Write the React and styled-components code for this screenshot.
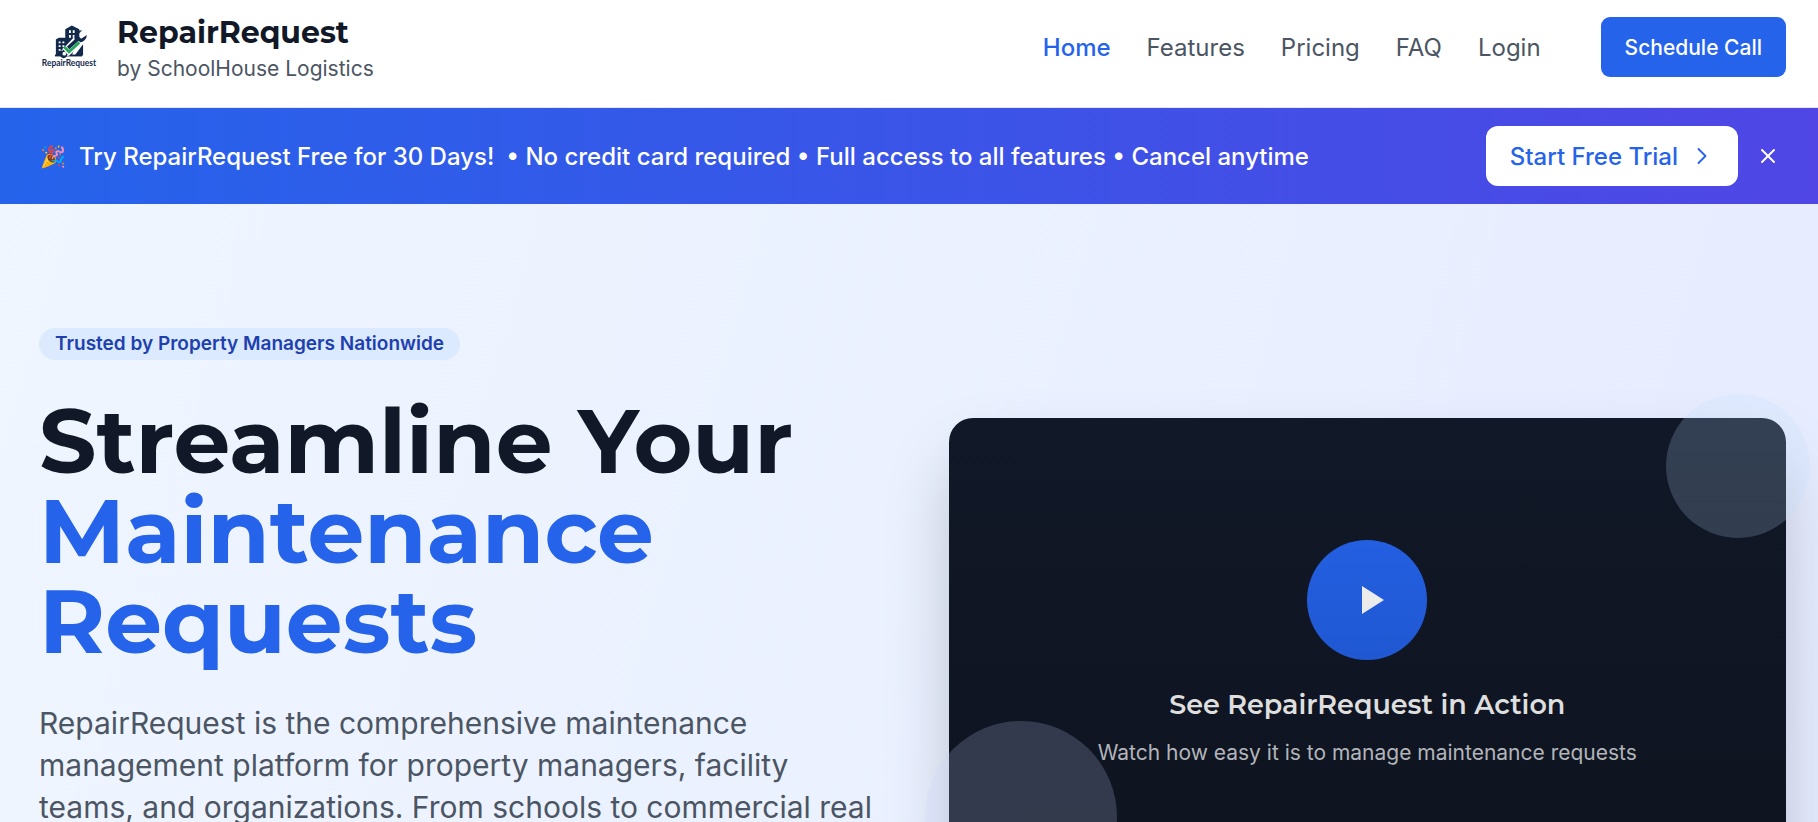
import React from "react";
import styled, { createGlobalStyle } from "styled-components";
import { ChevronRight, X } from "lucide-react";

const GlobalStyle = createGlobalStyle`
  *, *::before, *::after { box-sizing: border-box; }
  body { margin: 0; font-family: Inter, "Liberation Sans", sans-serif; color: #111827; }
  h1, h2, p { margin: 0; }
  a { color: inherit; text-decoration: none; }
  button { font-family: inherit; border: 0; cursor: pointer; }
`;

const Page = styled.div`
  display: flex;
  flex-direction: column;
  height: 100vh;
  overflow: hidden;
  background: linear-gradient(106deg, #eff6ff 0%, #e6ecff 100%);
`;

const Header = styled.header`
  display: flex;
  align-items: center;
  justify-content: space-between;
  flex: none;
  padding: 12px 32px 23px 39px;
  background: #fff;
  border-bottom: 1px solid #e5e7eb;
`;

const Brand = styled.a`
  display: flex;
  align-items: center;
  gap: 18px;
`;

const BrandText = styled.span`
  display: flex;
  flex-direction: column;
`;

const BrandName = styled.span`
  font-family: Montserrat, Inter, sans-serif;
  font-size: 30px;
  font-weight: 700;
  line-height: 42px;
`;

const Tagline = styled.span`
  font-size: 21px;
  line-height: 30px;
  color: #4b5563;
`;

const Nav = styled.nav`
  display: flex;
  align-items: center;
  gap: 36px;
`;

const NavLink = styled.a`
  font-size: 24px;
  line-height: 36px;
  font-weight: ${(p) => (p.$active ? 500 : 400)};
  color: ${(p) => (p.$active ? "#2563eb" : "#4b5563")};
`;

const ScheduleButton = styled.button`
  height: 60px;
  margin: 0 0 2px 24px;
  padding: 0 24px;
  border-radius: 9px;
  background: #2563eb;
  color: #fff;
  font-size: 21px;
  font-weight: 500;
`;

const Banner = styled.section`
  display: flex;
  align-items: center;
  flex: none;
  gap: 12px;
  height: 96px;
  padding: 0 32px 0 39px;
  background: linear-gradient(90deg, #2563eb, #4f46e5);
  color: #fff;
`;

const BannerText = styled.p`
  display: flex;
  align-items: center;
  flex: 1;
  gap: 12px;
  padding-top: 2px;
  font-size: 24px;
  line-height: 36px;
  font-weight: 500;
`;

const Emoji = styled.span`
  width: 28px;
  font-size: 21px;
  text-align: center;
`;

const TrialButton = styled.button`
  display: flex;
  align-items: center;
  gap: 10px;
  height: 60px;
  padding: 0 22px 0 24px;
  border-radius: 12px;
  background: #fff;
  color: #2563eb;
  font-size: 24px;
  font-weight: 500;
`;

const CloseButton = styled.button`
  display: flex;
  padding: 0 6px;
  background: transparent;
  color: #fff;
`;

const Hero = styled.main`
  display: grid;
  grid-template-columns: 1fr 1fr;
  align-items: start;
  flex: 1;
  gap: 72px;
  min-height: 0;
  padding: 124px 32px 0 39px;
`;

const Badge = styled.span`
  display: inline-block;
  padding: 0 16px;
  border-radius: 16px;
  background: #dbeafe;
  color: #1e40af;
  font-size: 19px;
  font-weight: 600;
  line-height: 32px;
`;

const Title = styled.h1`
  margin-top: 36px;
  font-family: Montserrat, Inter, sans-serif;
  font-size: 90px;
  font-weight: 700;
  line-height: 90px;
`;

const Accent = styled.span`
  display: block;
  color: #2563eb;
`;

const Lead = styled.p`
  margin-top: 36px;
  font-size: 30px;
  line-height: 42px;
  color: #4b5563;
`;

const VideoArea = styled.div`
  position: relative;
  margin-top: 90px;
`;

const VideoCard = styled.section`
  display: flex;
  flex-direction: column;
  align-items: center;
  justify-content: center;
  aspect-ratio: 16 / 9;
  border-radius: 24px;
  background: linear-gradient(#111827, #0e131f);
  box-shadow: 0 36px 72px -12px rgba(0, 0, 0, 0.25);
  text-align: center;
`;

const PlayButton = styled.button`
  display: flex;
  align-items: center;
  justify-content: center;
  width: 120px;
  height: 120px;
  border-radius: 50%;
  background: linear-gradient(#235fe1, #2058d2);
`;

const VideoTitle = styled.h2`
  margin-top: 24px;
  font-family: Montserrat, Inter, sans-serif;
  font-size: 27px;
  font-weight: 600;
  line-height: 42px;
  color: #dedede;
`;

const VideoText = styled.p`
  margin-top: 12px;
  font-size: 21px;
  line-height: 30px;
  color: #b2b5ba;
`;

const TopOrb = styled.span`
  position: absolute;
  top: -24px;
  right: -24px;
  width: 144px;
  height: 144px;
  border-radius: 50%;
  background: rgba(191, 219, 254, 0.2);
`;

const BottomOrb = styled(TopOrb)`
  top: auto;
  right: auto;
  bottom: -24px;
  left: -24px;
  width: 192px;
  height: 192px;
  background: rgba(199, 210, 254, 0.2);
`;

const LogoMark = () => (
  <svg width="60" height="60" viewBox="-2 -1 64 64" role="img" aria-label="RepairRequest logo">
    <path d="M16 39V22l3-2h7v-9l7-4 8 4v8l-8 20z" fill="#12294b" />
    <path d="M36 39l9-12v12z" fill="#12294b" />
    <path d="M15 39h29" stroke="#12294b" strokeWidth="2" />
    <path d="M19 24h2v2h-2zM23 24h2v2h-2zM19 28h2v2h-2zM23 28h2v2h-2zM19 32h2v2h-2zM30 12h2v3h-2zM34 12h2v3h-2zM30 17h2v3h-2zM34 17h2v3h-2z" fill="#fff" />
    <path d="M25 37L39 22" stroke="#fff" strokeWidth="9" />
    <path d="M44 12a8 8 0 0 0-8 10L23 34a4 4 0 1 0 5 5l12-14a8 8 0 0 0 9-8l-6 4-4-4z" fill="#12294b" />
    <circle cx="25" cy="37" r="2" fill="#fff" />
    <path d="M25 30l5 6 12-11" fill="none" stroke="#fff" strokeWidth="5" />
    <path d="M25 30l5 5 11-10" fill="none" stroke="#27a55a" strokeWidth="3" />
    <text x="30" y="50" textAnchor="middle" fontFamily="Lato, sans-serif" fontSize="9" fontWeight="700" fill="#12294b">RepairRequest</text>
  </svg>
);

export default function App() {
  return (
    <Page>
      <GlobalStyle />
      <Header>
        <Brand href="#">
          <LogoMark />
          <BrandText>
            <BrandName>RepairRequest</BrandName>
            <Tagline>by SchoolHouse Logistics</Tagline>
          </BrandText>
        </Brand>
        <Nav>
          <NavLink href="#home" $active>Home</NavLink>
          <NavLink href="#features">Features</NavLink>
          <NavLink href="#pricing">Pricing</NavLink>
          <NavLink href="#faq">FAQ</NavLink>
          <NavLink href="#login">Login</NavLink>
          <ScheduleButton type="button">Schedule Call</ScheduleButton>
        </Nav>
      </Header>
      <Banner>
        <BannerText>
          <Emoji>🎉</Emoji>
          <span>Try RepairRequest Free for 30 Days!</span>
          <span>• No credit card required • Full access to all features • Cancel anytime</span>
        </BannerText>
        <TrialButton type="button">
          Start Free Trial
          <ChevronRight size={28} strokeWidth={1.6} aria-hidden="true" />
        </TrialButton>
        <CloseButton type="button" aria-label="Dismiss">
          <X size={24} aria-hidden="true" />
        </CloseButton>
      </Banner>
      <Hero>
        <div>
          <Badge>Trusted by Property Managers Nationwide</Badge>
          <Title>
            Streamline Your
            <Accent>Maintenance Requests</Accent>
          </Title>
          <Lead>
            RepairRequest is the comprehensive maintenance management platform for property
            managers, facility teams, and organizations. From schools to commercial real
          </Lead>
        </div>
        <VideoArea>
          <VideoCard>
            <PlayButton type="button" aria-label="Play video">
              <svg width="48" height="48" viewBox="0 0 48 48" aria-hidden="true">
                <path d="M19 10v28l22-14z" fill="#ececec" />
              </svg>
            </PlayButton>
            <VideoTitle>See RepairRequest in Action</VideoTitle>
            <VideoText>Watch how easy it is to manage maintenance requests</VideoText>
          </VideoCard>
          <TopOrb />
          <BottomOrb />
        </VideoArea>
      </Hero>
    </Page>
  );
}
